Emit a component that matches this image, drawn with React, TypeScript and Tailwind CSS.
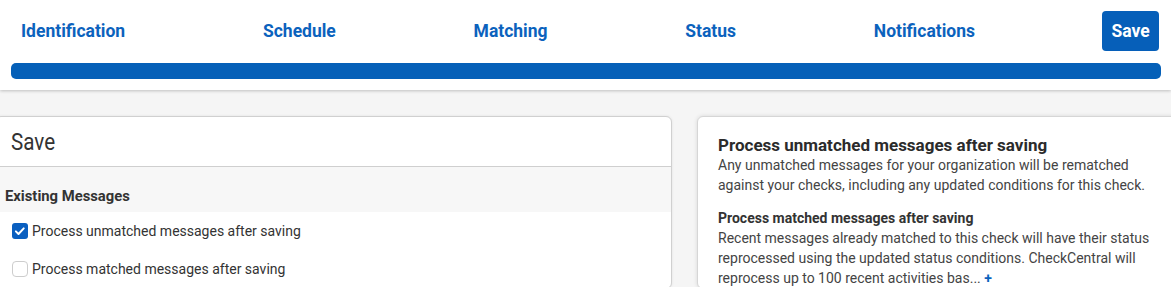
import React from "react"

const steps = ["Identification", "Schedule", "Matching", "Status", "Notifications"]

const Checkbox = ({ checked }: { checked: boolean }) =>
  checked ? (
    <span className="flex h-4 w-4 shrink-0 items-center justify-center rounded-[3px] bg-[#0a5fc0]">
      <svg viewBox="0 0 16 16" className="h-3 w-3" fill="none">
        <path
          d="M2.5 8.5l3.5 3.5 7-7.5"
          stroke="white"
          strokeWidth="2.6"
          strokeLinecap="round"
          strokeLinejoin="round"
        />
      </svg>
    </span>
  ) : (
    <span className="h-4 w-4 shrink-0 rounded-[4px] border border-[#cdcdcd] bg-white" />
  )

const App = () => {
  return (
    <div className="h-[287px] overflow-hidden bg-[#f5f5f5] font-['Roboto',sans-serif] text-[#333]">
      <header className="bg-white pl-[11px] pr-[10px] pt-[11px] pb-[11px] shadow-[0_1px_3px_rgba(0,0,0,0.22)]">
        <div className="flex h-10 items-center">
          <nav className="flex flex-1 justify-between pl-[10px]">
            {steps.map((step) => (
              <span key={step} className="text-[17.5px] font-bold text-[#0b62bd]">
                {step}
              </span>
            ))}
          </nav>
          <button className="ml-[127px] mr-[2px] h-10 w-[57px] rounded-[4px] bg-[#065fb9] text-[17.5px] font-bold text-white">
            Save
          </button>
        </div>
        <div className="mt-3 h-4 rounded-[5px] bg-[#0560b8]" />
      </header>

      <main className="-ml-[5px] flex gap-[25px] pt-[26px]">
        <section className="w-[677px] shrink-0 rounded-[6px] border border-[#d0d0d0] bg-white shadow-[0_0_3px_rgba(0,0,0,0.08)]">
          <div className="flex h-[50px] items-center border-b border-[#cfcfcf] pl-[15px]">
            <h1 className="origin-left scale-x-[0.86] text-[24px] font-normal text-[#333]">Save</h1>
          </div>
          <div className="h-[45px] bg-[#f7f7f7] pl-[9px] pt-[21px]">
            <h2 className="text-[14.8px] font-bold leading-4 text-[#333]">Existing Messages</h2>
          </div>
          <div className="flex flex-col gap-[22px] pl-[16px] pt-[11px]">
            <label className="flex items-center gap-[4px] text-[14px] leading-4">
              <Checkbox checked />
              <span>Process unmatched messages after saving</span>
            </label>
            <label className="flex items-center gap-[4px] text-[14px] leading-4">
              <Checkbox checked={false} />
              <span>Process matched messages after saving</span>
            </label>
          </div>
        </section>

        <section className="w-[490px] shrink-0 rounded-[6px] border border-[#d6d6d6] bg-white px-5 pt-[19px] shadow-[0_0_4px_rgba(0,0,0,0.12)]">
          <h3 className="text-[17px] font-bold leading-[19px] text-[#2b2b2b]">
            Process unmatched messages after saving
          </h3>
          <p className="text-[14px] leading-5 text-[#444]">
            Any unmatched messages for your organization will be rematched against your checks,
            including any updated conditions for this check.
          </p>
          <h4 className="mt-[13px] text-[14px] font-bold leading-5 text-[#333]">
            Process matched messages after saving
          </h4>
          <p className="text-[14px] leading-5 text-[#444]">
            Recent messages already matched to this check will have their status reprocessed using
            the updated status conditions. CheckCentral will reprocess up to 100 recent activities
            bas... <span className="font-bold text-[#0b62bd]">+</span>
          </p>
        </section>
      </main>
    </div>
  )
}

export default App
